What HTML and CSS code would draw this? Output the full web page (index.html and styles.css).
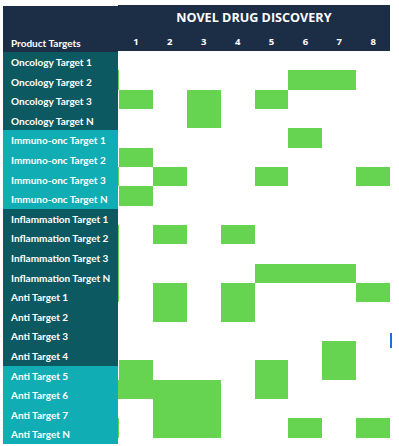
FILE: index.html
```html
<!DOCTYPE html>
<html>
<head>
<meta charset="utf-8">
<link rel="stylesheet" href="styles.css">
</head>
<body>
<div class="chart">
  <div class="targets">
    <div class="targets-head">Product Targets</div>
    <div class="row dark">Oncology Target 1</div>
    <div class="row dark">Oncology Target 2</div>
    <div class="row dark">Oncology Target 3</div>
    <div class="row dark">Oncology Target N</div>
    <div class="row light">Immuno-onc Target 1</div>
    <div class="row light">Immuno-onc Target 2</div>
    <div class="row light">Immuno-onc Target 3</div>
    <div class="row light">Immuno-onc Target N</div>
    <div class="row dark">Inflammation Target 1</div>
    <div class="row dark">Inflammation Target 2</div>
    <div class="row dark">Inflammation Target 3</div>
    <div class="row dark">Inflammation Target N</div>
    <div class="row dark">Anti Target 1</div>
    <div class="row dark">Anti Target 2</div>
    <div class="row dark">Anti Target 3</div>
    <div class="row dark">Anti Target 4</div>
    <div class="row light">Anti Target 5</div>
    <div class="row light">Anti Target 6</div>
    <div class="row light">Anti Target 7</div>
    <div class="row light">Anti Target N</div>
  </div>
  <div class="discovery">
    <div class="disc-head">
      <div class="title">NOVEL DRUG DISCOVERY</div>
      <div class="cols">
        <span>1</span><span>2</span><span>3</span><span>4</span><span>5</span><span>6</span><span>7</span><span>8</span>
      </div>
    </div>
    <div class="grid">
      <div class="cell" style="grid-area: 2 / 1 / span 1 / span 1"></div>
      <div class="cell" style="grid-area: 2 / 7 / span 1 / span 2"></div>
      <div class="cell" style="grid-area: 3 / 2 / span 1 / span 1"></div>
      <div class="cell" style="grid-area: 3 / 4 / span 2 / span 1"></div>
      <div class="cell" style="grid-area: 3 / 6 / span 1 / span 1"></div>
      <div class="cell" style="grid-area: 5 / 7 / span 1 / span 1"></div>
      <div class="cell" style="grid-area: 6 / 2 / span 1 / span 1"></div>
      <div class="cell" style="grid-area: 7 / 1 / span 1 / span 1"></div>
      <div class="cell" style="grid-area: 7 / 3 / span 1 / span 1"></div>
      <div class="cell" style="grid-area: 7 / 6 / span 1 / span 1"></div>
      <div class="cell" style="grid-area: 7 / 9 / span 1 / span 1"></div>
      <div class="cell" style="grid-area: 8 / 2 / span 1 / span 1"></div>
      <div class="cell" style="grid-area: 10 / 1 / span 4 / span 1"></div>
      <div class="cell" style="grid-area: 10 / 3 / span 1 / span 1"></div>
      <div class="cell" style="grid-area: 10 / 5 / span 1 / span 1"></div>
      <div class="cell" style="grid-area: 12 / 6 / span 1 / span 3"></div>
      <div class="cell" style="grid-area: 13 / 3 / span 2 / span 1"></div>
      <div class="cell" style="grid-area: 13 / 5 / span 2 / span 1"></div>
      <div class="cell" style="grid-area: 13 / 9 / span 1 / span 1"></div>
      <div class="cell" style="grid-area: 16 / 8 / span 2 / span 1"></div>
      <div class="cell" style="grid-area: 17 / 2 / span 2 / span 1"></div>
      <div class="cell" style="grid-area: 17 / 6 / span 2 / span 1"></div>
      <div class="cell" style="grid-area: 18 / 1 / span 1 / span 1"></div>
      <div class="cell" style="grid-area: 18 / 3 / span 3 / span 2"></div>
      <div class="cell" style="grid-area: 20 / 1 / span 1 / span 1"></div>
      <div class="cell" style="grid-area: 20 / 7 / span 1 / span 1"></div>
      <div class="cell" style="grid-area: 20 / 9 / span 1 / span 1"></div>
      <div class="caret"></div>
    </div>
  </div>
</div>
</body>
</html>
```
FILE: styles.css
```css
html, body {
  margin: 0;
  padding: 0;
  background: #ffffff;
}

body {
  font-family: Lato, "Open Sans", sans-serif;
  color: #ffffff;
}

.chart {
  display: flex;
  align-items: flex-start;
  margin-left: 3px;
}

.targets {
  width: 114.5px;
  margin-top: 6px;
  display: flex;
  flex-direction: column;
}

.targets-head {
  height: 46px;
  background: #1c2e46;
  box-sizing: border-box;
  padding: 31px 0 0 8px;
  font-size: 10px;
  font-weight: 700;
  line-height: 13px;
}

.row {
  height: 19.6px;
  box-sizing: border-box;
  padding-left: 8px;
  padding-top: 1px;
  font-size: 10px;
  font-weight: 700;
  line-height: 19px;
  white-space: nowrap;
}

.row.dark {
  background: #0c5961;
}

.row.light {
  background: #10adb4;
}

.discovery {
  width: 272.7px;
  margin-top: 5px;
  display: flex;
  flex-direction: column;
}

.disc-head {
  height: 46px;
  background: #1c2e46;
  display: flex;
  flex-direction: column;
}

.title {
  text-align: center;
  font-family: "Open Sans", sans-serif;
  font-size: 12.6px;
  font-weight: 700;
  padding-top: 4px;
  line-height: 18px;
}

.cols {
  display: grid;
  grid-template-columns: repeat(8, 33.9px);
  margin-left: 1.5px;
  margin-top: 9px;
  font-family: "Open Sans", sans-serif;
  font-size: 9.5px;
  font-weight: 700;
  line-height: 12px;
  text-align: center;
}

.grid {
  position: relative;
  display: grid;
  grid-template-columns: 1.5px repeat(8, 33.9px);
  grid-template-rows: repeat(20, 19.33px);
  background: #ffffff;
}

.cell {
  background: #66d450;
}

.caret {
  position: absolute;
  left: 272.7px;
  top: 282px;
  width: 2px;
  height: 15px;
  background: #1a6fe0;
}
```
